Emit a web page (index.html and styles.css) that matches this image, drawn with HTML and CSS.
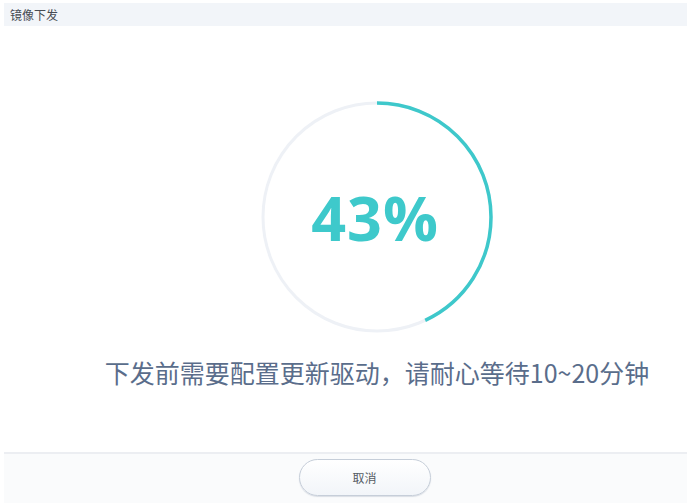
FILE: index.html
```html
<!DOCTYPE html>
<html lang="zh-CN">
<head>
    <meta charset="UTF-8">
    <title>镜像下发</title>
    <link rel="stylesheet" href="styles.css">
</head>
<body>
    <div class="dialog">
        <div class="dialog-title">镜像下发</div>

        <div class="dialog-body">
            <div class="progress">
                <svg class="ring" width="232" height="232" viewBox="0 0 232 232">
                    <circle class="ring-track" cx="116" cy="116" r="114"></circle>
                    <circle class="ring-bar" cx="116" cy="116" r="114"
                            stroke-dasharray="308 716" transform="rotate(-90 116 116)"></circle>
                </svg>
                <div class="percent">43%</div>
            </div>
            <p class="message">下发前需要配置更新驱动，请耐心等待10~20分钟</p>
        </div>

        <div class="dialog-footer">
            <button type="button" class="btn">取消</button>
        </div>
    </div>
</body>
</html>
```

FILE: styles.css
```css
* {
    margin: 0;
    padding: 0;
    box-sizing: border-box;
}

body {
    font-family: "Noto Sans CJK SC", "Noto Sans", sans-serif;
    background: #fff;
    width: 687px;
    height: 503px;
    overflow: hidden;
}

.dialog {
    display: flex;
    flex-direction: column;
    height: 503px;
    padding: 3px 0 0 4px;
}

.dialog-title {
    height: 23px;
    line-height: 23px;
    padding-left: 6px;
    font-size: 12px;
    color: #474c54;
    background: #f2f5f9;
}

.dialog-body {
    flex: 1;
    display: flex;
    flex-direction: column;
    align-items: center;
    padding: 75px 0 0 63px;
}

.progress {
    display: grid;
    place-items: center;
}

.progress > * {
    grid-area: 1 / 1;
}

.ring-track {
    fill: none;
    stroke: #eef1f6;
    stroke-width: 3;
}

.ring-bar {
    fill: none;
    stroke: #3ec8cb;
    stroke-width: 3.5;
}

.percent {
    font-family: "Open Sans", sans-serif;
    font-weight: 700;
    font-size: 61px;
    color: #3ec9cb;
    letter-spacing: 1px;
    margin-left: -4px;
}

.message {
    margin-top: 22px;
    font-size: 25px;
    line-height: 34px;
    color: #5a6d8b;
    white-space: nowrap;
}

.dialog-footer {
    height: 51px;
    border-top: 2px solid #eceef2;
    background: #fafbfc;
    display: flex;
    justify-content: center;
    padding: 5px 0 0 38px;
}

.btn {
    width: 132px;
    height: 37px;
    border: 1px solid #c6ced9;
    border-radius: 19px;
    background: linear-gradient(#ffffff, #f2f5f9);
    box-shadow: 0 1px 1px rgba(120, 135, 160, 0.25);
    font-family: inherit;
    font-size: 12px;
    color: #555b63;
    cursor: pointer;
}
```
